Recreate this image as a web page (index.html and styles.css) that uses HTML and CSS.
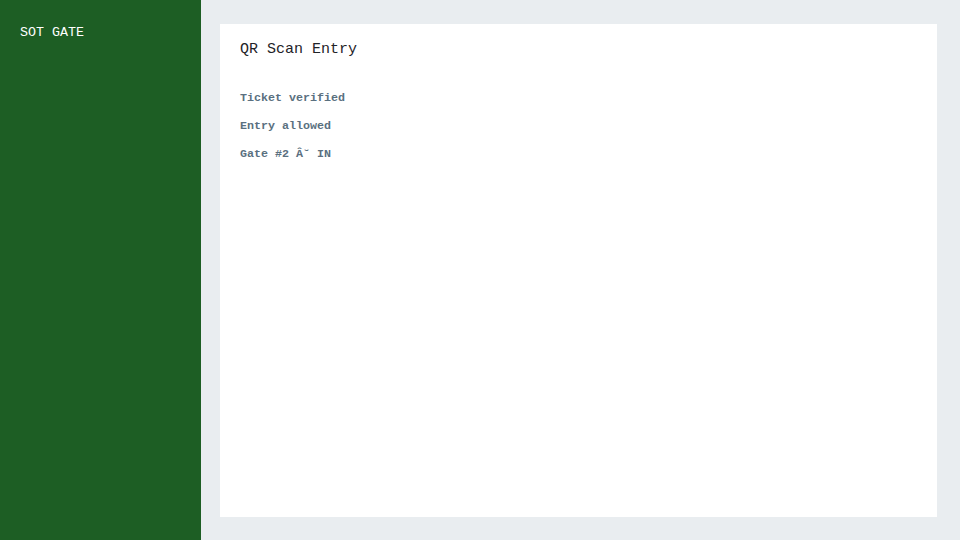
FILE: index.html
```html
<!DOCTYPE html>
<html lang="en">
<head>
    <meta charset="UTF-8">
    <title>SOT Gate - QR Scan Entry</title>
    <link rel="stylesheet" href="styles.css">
</head>
<body>

    <div class="sidebar">
        <div class="brand">SOT GATE</div>
    </div>

    <div class="main">
        <div class="card">
            <h2>QR Scan Entry</h2>
            <div class="result">
                <p>Ticket verified</p>
                <p>Entry allowed</p>
                <p>Gate #2 Â˘ IN</p>
            </div>
        </div>
    </div>

</body>
</html>
```

FILE: styles.css
```css
body { margin: 0; display: flex; height: 100vh; font-family: "Liberation Mono", monospace; background: #e9edf0; }
.sidebar { width: 201px; background: #1d5e24; color: white; padding: 25px 20px; box-sizing: border-box; }
.brand { font-size: 13.34px; line-height: 16px; }
.main { flex: 1; padding: 24px 23px 23px 19px; display: flex; }
.card { flex: 1; background: white; padding: 17px 20px; }
.card h2 { margin: 0 0 33px; font-size: 15px; font-weight: normal; color: #1f2328; }
.result p { margin: 0 0 14px; font-size: 11.67px; font-weight: bold; color: #5a7080; line-height: 14px; }
```
